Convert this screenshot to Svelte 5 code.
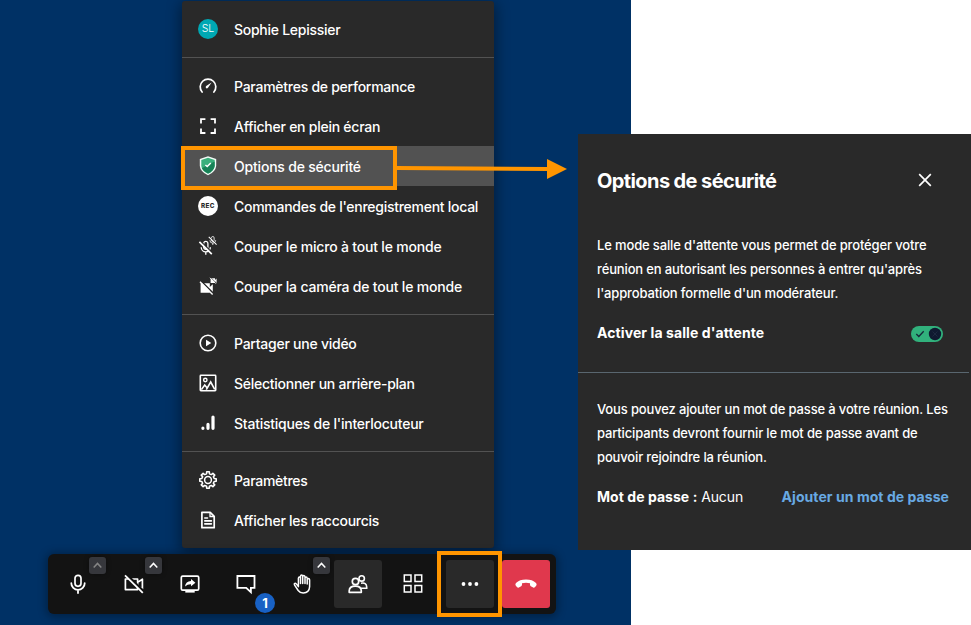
<script>
  const groups = [
    [{ icon: 'avatar', label: 'Sophie Lepissier', tracking: -0.27 }],
    [
      { icon: 'gauge', label: 'Paramètres de performance', tracking: -0.26 },
      { icon: 'full', label: 'Afficher en plein écran', tracking: -0.25 },
      { icon: 'shield', label: 'Options de sécurité', active: true, tracking: -0.2 },
      { icon: 'rec', label: "Commandes de l'enregistrement local", tracking: -0.27 },
      { icon: 'muteall', label: 'Couper le micro à tout le monde', tracking: -0.19 },
      { icon: 'camall', label: 'Couper la caméra de tout le monde', tracking: -0.2 }
    ],
    [
      { icon: 'play', label: 'Partager une vidéo', tracking: -0.25 },
      { icon: 'image', label: 'Sélectionner un arrière-plan', tracking: -0.26 },
      { icon: 'stats', label: "Statistiques de l'interlocuteur", tracking: -0.23 }
    ],
    [
      { icon: 'gear', label: 'Paramètres', tracking: -0.3 },
      { icon: 'doc', label: 'Afficher les raccourcis', tracking: -0.26 }
    ]
  ];

  const tools = [
    { icon: 'mic', chevron: 'dim' },
    { icon: 'cam', chevron: 'lit' },
    { icon: 'share' },
    { icon: 'chat', badge: '1' },
    { icon: 'hand', chevron: 'lit' },
    { icon: 'people', kind: 'raised' },
    { icon: 'tiles' },
    { icon: 'more', kind: 'raised', framed: true },
    { icon: 'hangup', kind: 'danger' }
  ];

  const teeth = Array.from({ length: 8 }, (_, i) => i * 45);
  const gearPath = teeth
    .map((a) => {
      const p = (r, d) => {
        const t = ((a + d) * Math.PI) / 180;
        return `${(10 + r * Math.cos(t)).toFixed(2)} ${(10 + r * Math.sin(t)).toFixed(2)}`;
      };
      return `${a === 0 ? 'M' : 'L'}${p(6.4, -13)}L${p(8.3, -9)}L${p(8.3, 9)}L${p(6.4, 13)}Q${p(5.9, 22.5)} ${p(6.4, 32)}`;
    })
    .join('') + 'Z';
</script>

{#snippet micSlash()}
  <rect x="-2.1" y="-6.5" width="4.2" height="8" rx="2.1" fill="none" stroke-width="1.3" />
  <path d="M-4.6-.6a4.6 4.6 0 0 0 9.2 0M0 4v3" stroke-width="1.3" />
  <path d="M-4.4-5.8 5.6 4.2" stroke="#292929" stroke-width="1.3" />
  <path d="M-6.4-6 6 6.4" stroke-width="1.7" />
{/snippet}

{#snippet camSlash()}
  <path d="M-6-4.6H3.2V-.8L6.2-3.6V4.8L3.2 2.2V5H-6Z" fill="#fff" stroke="none" />
  <path d="M-4.8-6 6.2 5" stroke="#292929" stroke-width="1.6" />
  <path d="M-6.6-6 6 6.6" stroke-width="1.4" />
{/snippet}

{#snippet menuIcon(name)}
  {#if name === 'avatar'}
    <span class="avatar">SL</span>
  {:else if name === 'rec'}
    <span class="rec">REC</span>
  {:else}
    <svg class="glyph" viewBox="0 0 20 20">
      {#if name === 'gauge'}
        <path d="M4.1 16A7.8 7.8 0 1 1 15.9 16" stroke-width="1.7" stroke-linecap="round" />
        <path d="M8.2 10.1 13.6 6.4 10 11.8Q8.8 12.9 8 12 7.2 11.1 8.2 10.1Z" fill="#fff" stroke="none" />
      {:else if name === 'full'}
        <path d="M3 7.6V3.2H7.4M12.6 3.2H17V7.6M17 12.6V17H12.6M7.4 17H3V12.6" stroke-width="1.8" />
      {:else if name === 'shield'}
        <path d="M10 .3 18.2 3V10Q17.5 16 10 19.3 2.5 16 1.8 10V3Z" fill="#f3fbf7" stroke="none" />
        <path d="M10 1.8 16.7 4V10Q16.1 15 10 17.7 3.9 15 3.3 10V4Z" fill="#3aaf7c" stroke="none" />
        <path d="M3.8 12.2 16.6 5.6V10Q16 15 10 17.6 5.6 15.8 3.8 12.2Z" fill="#178257" stroke="none" />
        <path d="M7.4 9 9.2 10.5 12.8 7" stroke-width="1.5" />
      {:else if name === 'muteall'}
        <g transform="translate(7.8 11.8)">{@render micSlash()}</g>
        <g transform="translate(14.8 4.6) scale(.63)">{@render micSlash()}</g>
      {:else if name === 'camall'}
        <g transform="translate(8.6 11.8)">{@render camSlash()}</g>
        <path d="M12.6 2.3H17V4L18.6 2.5V6.9L17 5.4V6.9H12.6Z" fill="#fff" stroke="none" />
        <path d="M12.9 1.7 17.6 6.4" stroke="#292929" stroke-width=".7" />
        <path d="M12 1.8 17.9 7.7" stroke-width=".9" />
      {:else if name === 'play'}
        <circle cx="10" cy="10" r="7.8" stroke-width="1.6" />
        <path d="M8 6.7 13.3 10 8 13.3Z" fill="#fff" stroke="none" />
      {:else if name === 'image'}
        <rect x="2.3" y="2.3" width="15.4" height="15.4" rx=".6" stroke-width="1.6" />
        <circle cx="7.3" cy="7" r="1.7" stroke-width="1.4" />
        <path d="M3.4 16.6 6.7 12 9 14.8M8.3 16.6 12.7 9 16.7 16.3" stroke-width="1.6" />
      {:else if name === 'stats'}
        <path d="M4.9 15.2V15.3M10 11.4V15.3M15 4V15.3" stroke-width="3.2" stroke-linecap="round" />
      {:else if name === 'gear'}
        <path d={gearPath} stroke-width="1.6" stroke-linejoin="round" />
        <circle cx="10" cy="10" r="3.4" stroke-width="1.5" />
      {:else if name === 'doc'}
        <path d="M3.9 2.3H12.2L16.2 6.3V17.7H3.9Z" stroke-width="1.7" stroke-linejoin="round" />
        <path d="M12 2.8V6.5H16" stroke-width="1.3" />
        <path d="M6.8 8H9.5M6.8 10.9H13.4M6.8 13.9H13.4" stroke-width="1.6" stroke-linecap="round" />
      {/if}
    </svg>
  {/if}
{/snippet}

{#snippet toolIcon(name)}
  <svg class="glyph tool-glyph" viewBox="0 0 24 24">
    {#if name === 'mic'}
      <rect x="9" y="3.3" width="6" height="11" rx="3" stroke-width="1.7" />
      <path d="M5.3 11.2A6.7 6.7 0 0 0 18.7 11.2M12 18V21" stroke-width="1.8" stroke-linecap="round" />
    {:else if name === 'cam'}
      <path d="M3.4 7V17.6H15.6V7Z M15.6 10.4 20.4 7.2V17L15.6 14.2" stroke-width="1.7" stroke-linejoin="round" />
      <path d="M4.4 2.4 22 19.6" stroke="#131313" stroke-width="2.4" />
      <path d="M3 3.4 20.8 20.8" stroke-width="1.8" />
    {:else if name === 'share'}
      <rect x="3.3" y="4.2" width="17.4" height="14" rx="1.4" stroke-width="1.7" />
      <path d="M7.3 18.5H16.7V20.6H7.3Z" fill="#fff" stroke="none" />
      <path d="M7 14.6Q7.6 9.4 13 9.1V6.9L17.4 10.7 13 14.3V12.2Q9.6 12 7 14.6Z" fill="#fff" stroke="none" />
    {:else if name === 'chat'}
      <path d="M3.4 4H20.5V15.8H16.9V20.2L12.2 15.8H3.4Z" stroke-width="1.8" />
    {:else if name === 'hand'}
      <path d="M8.4 14.6 6.3 11.9Q5.3 10.8 4.5 11.5 4 12.1 4.6 13.1L8.2 18.5Q10 21 13.2 21 19.3 20.8 19.6 14.8V7.8Q19.5 6.5 18.4 6.5 17.3 6.6 17.2 7.8M8.4 14.6V6.2Q8.5 5 9.4 5 10.4 5 10.5 6.2V11.6M10.5 11.6V4.4Q10.6 3.1 11.6 3.1 12.6 3.1 12.7 4.4V11.6M12.7 4.6Q12.9 3.3 13.9 3.4 14.9 3.5 15 4.9V11.6M15 6.2Q15.1 4.9 16.1 4.9 17.1 4.9 17.2 6.2V12" stroke-width="1.5" stroke-linecap="round" stroke-linejoin="round" />
    {:else if name === 'people'}
      <circle cx="15.7" cy="6.4" r="2.7" stroke-width="1.6" />
      <path d="M15 11.2Q20.5 10 20.7 15V16.2H15" stroke-width="1.6" />
      <circle cx="9.5" cy="9.5" r="3.2" fill="#292929" stroke-width="1.7" />
      <path d="M3.2 20.3V18.8Q3.4 14.2 9.3 14.2 15.1 14.2 15.3 18.8V20.3Z" fill="#292929" stroke-width="1.7" stroke-linejoin="round" />
    {:else if name === 'tiles'}
      <path d="M2.3 2.9H9V9.6H2.3ZM13 2.9H19.7V9.6H13ZM2.3 13.4H9V20.1H2.3ZM13 13.4H19.7V20.1H13Z" stroke-width="1.5" />
    {:else if name === 'more'}
      <g fill="#fff" stroke="none"><circle cx="5.5" cy="12" r="1.9" /><circle cx="12" cy="12" r="1.9" /><circle cx="18.4" cy="12" r="1.9" /></g>
    {:else if name === 'hangup'}
      <path d="M12 7.6Q18.4 7.6 22 11Q23.2 12.4 22.2 13.7L20.8 15.3Q20.1 16 19.2 15.5L16.8 14.2Q16 13.7 16 12.8V11.3Q12 10 8 11.3V12.8Q8 13.7 7.2 14.2L4.8 15.5Q3.9 16 3.2 15.3L1.8 13.7Q.8 12.4 2 11Q5.6 7.6 12 7.6Z" fill="#fff" stroke="none" />
    {/if}
  </svg>
{/snippet}

<main class="page">
  <section class="meeting">
    <nav class="menu">
      {#each groups as group}
        <ul class="group">
          {#each group as item}
            <li class="item" class:active={item.active}>
              <span class="slot">{@render menuIcon(item.icon)}</span>
              <span class="label" style="letter-spacing: {item.tracking}px">{item.label}</span>
              {#if item.active}<span class="frame item-frame"></span>{/if}
            </li>
          {/each}
        </ul>
      {/each}
    </nav>

    <div class="toolbar">
      {#each tools as tool}
        <div class="tool {tool.kind ?? ''}">
          {@render toolIcon(tool.icon)}
          {#if tool.chevron}
            <span class="chevron {tool.chevron}">
              <svg viewBox="0 0 17 17"><path d="M4.7 10.5 8.5 6.4 12.3 10.5" /></svg>
            </span>
          {/if}
          {#if tool.badge}<span class="badge">{tool.badge}</span>{/if}
          {#if tool.framed}<span class="frame tool-frame"></span>{/if}
        </div>
      {/each}
    </div>
  </section>

  <svg class="arrow" viewBox="0 0 172 22">
    <path d="M0 10 152 11" stroke="#ff9500" stroke-width="4" />
    <path d="M151 1 171 11 151 21Z" fill="#ff9500" />
  </svg>

  <section class="dialog">
    <header class="head">
      <h1>Options de sécurité</h1>
      <svg class="close" viewBox="0 0 14 14"><path d="M1.2 1.2 12.8 12.8M12.8 1.2 1.2 12.8" /></svg>
    </header>
    <div class="lobby">
      <p class="copy first">Le mode salle d'attente vous permet de protéger votre<br />réunion en autorisant les personnes à entrer qu'après<br />l'approbation formelle d'un modérateur.</p>
      <div class="line">
        <strong class="enable">Activer la salle d'attente</strong>
        <span class="switch">
          <svg viewBox="0 0 32 16">
            <path d="M5.3 8 7.8 10.5 12.7 5.2" stroke="#15283a" stroke-width="1.3" />
            <circle cx="24" cy="8" r="6.2" fill="#0f1a30" />
            <path d="M21.5 5.5 26.5 10.5M26.5 5.5 21.5 10.5" stroke="#1d2940" stroke-width="1" />
          </svg>
        </span>
      </div>
    </div>
    <div class="password">
      <p class="copy second">Vous pouvez ajouter un mot de passe à votre réunion. Les<br />participants devront fournir le mot de passe avant de<br />pouvoir rejoindre la réunion.</p>
      <div class="line">
        <span class="current"><strong>Mot de passe :</strong> Aucun</span>
        <strong class="link">Ajouter un mot de passe</strong>
      </div>
    </div>
  </section>
</main>

<style>
  :global(body) { background: #fff; }
  .page {
    position: relative;
    width: 971px;
    height: 625px;
    overflow: hidden;
    color: #fff;
    font-family: Inter, 'Liberation Sans', sans-serif;
  }
  .meeting {
    box-sizing: border-box;
    width: 631px;
    height: 625px;
    padding-top: 1px;
    background: #003165;
  }
  .menu {
    box-sizing: border-box;
    width: 312px;
    height: 547px;
    margin-left: 182px;
    border-radius: 3px;
    background: #292929;
    box-shadow: 0 4px 14px 2px rgba(0, 0, 0, 0.4);
  }
  .group { margin: 0; padding: 8px 0; list-style: none; }
  .group + .group { border-top: 1px solid #525252; }
  .item {
    position: relative;
    display: flex;
    align-items: center;
    gap: 16px;
    height: 40px;
    padding-left: 16px;
    font-size: 14px;
    font-weight: 500;
    white-space: nowrap;
  }
  .item.active { background: #525252; }
  .slot { display: flex; width: 20px; height: 20px; }
  .label { padding-top: 1px; }
  .glyph { display: block; width: 20px; height: 20px; fill: none; stroke: #fff; }
  .avatar, .rec {
    width: 20px;
    height: 20px;
    border-radius: 50%;
    line-height: 20px;
    text-align: center;
  }
  .avatar { background: #00a8b3; font-size: 10.5px; font-weight: 300; }
  .rec { background: #fff; color: #292929; font-size: 6.3px; font-weight: 800; letter-spacing: 0.4px; }
  .frame { position: absolute; box-sizing: border-box; border: 4px solid #ff9500; }
  .item-frame { left: -1px; top: 0; width: 216px; height: 44px; z-index: 1; }
  .tool-frame { left: -9px; top: -9px; width: 65px; height: 66px; z-index: 1; }

  .toolbar {
    box-sizing: border-box;
    display: flex;
    gap: 8px;
    width: 508px;
    height: 60px;
    margin: 6px 0 0 48px;
    padding: 6px;
    border-radius: 6px;
    background: #131313;
    box-shadow: 0 1px 8px 2px rgba(0, 0, 0, 0.32);
  }
  .tool {
    position: relative;
    display: flex;
    align-items: center;
    justify-content: center;
    width: 48px;
    height: 48px;
    border-radius: 3px;
  }
  .raised { background: #292929; }
  .danger { background: #e0384d; }
  .tool-glyph { width: 24px; height: 24px; }
  .chevron {
    position: absolute;
    right: -4px;
    top: -3px;
    width: 17px;
    height: 17px;
    border-radius: 3px;
    background: #36373c;
    box-shadow: 0 0 5px rgba(0, 0, 0, 0.4);
  }
  .chevron svg { display: block; fill: none; stroke: #fff; stroke-width: 1.5; }
  .chevron.dim svg { stroke: #858585; }
  .badge {
    position: absolute;
    left: 33px;
    top: 33px;
    width: 20px;
    height: 20px;
    border-radius: 50%;
    background: #1861c4;
    font-size: 13px;
    font-weight: 700;
    line-height: 20px;
    text-align: center;
  }
  .arrow { position: absolute; left: 396px; top: 158px; width: 172px; height: 22px; fill: none; }

  .dialog {
    position: absolute;
    left: 578px;
    top: 134px;
    box-sizing: border-box;
    width: 393px;
    height: 416px;
    background: #292929;
    white-space: nowrap;
  }
  .head {
    display: flex;
    align-items: center;
    justify-content: space-between;
    height: 94px;
    padding: 0 39px 0 19px;
  }
  h1 { margin: 0; font-size: 20px; font-weight: 700; letter-spacing: -0.6px; }
  .close { width: 14px; height: 14px; fill: none; stroke: #fff; stroke-width: 1.7; margin-top: -2px; }
  .lobby {
    box-sizing: border-box;
    width: 391px;
    height: 145px;
    padding: 5px 26px 0 19px;
    border-bottom: 1px solid #59666f;
  }
  .password { padding: 24px 22px 0 19px; }
  .copy { margin: 0 0 15px; font-size: 13px; font-weight: 450; line-height: 24px; }
  .first { letter-spacing: -0.14px; }
  .second { letter-spacing: -0.15px; }
  .line { display: flex; align-items: center; justify-content: space-between; height: 24px; font-size: 14px; }
  strong { font-weight: 700; }
  .enable { letter-spacing: 0.09px; }
  .link { letter-spacing: 0.06px; }
  .switch { width: 32px; height: 16px; margin-top: 3px; border-radius: 8px; background: #31b17c; }
  .switch svg { display: block; fill: none; }
  .current { letter-spacing: -0.12px; }
  .current strong { letter-spacing: 0.05px; }
  .link { color: #68a9e3; }
</style>
